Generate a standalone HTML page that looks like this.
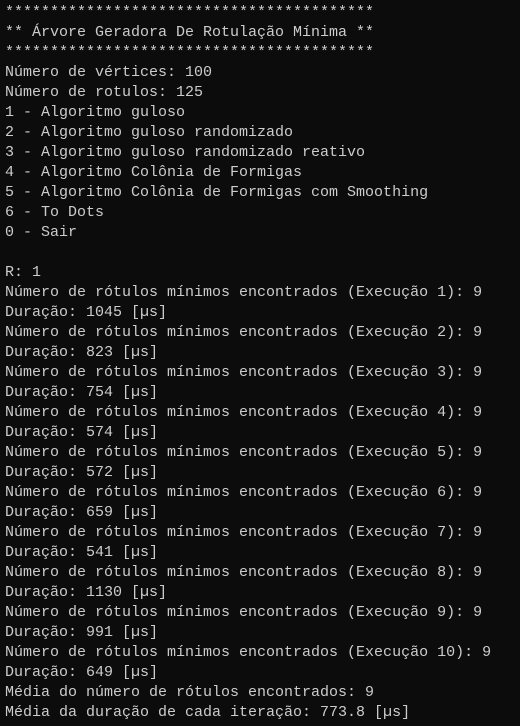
<!DOCTYPE html>
<html><head><meta charset="utf-8"><style>
html,body{margin:0;padding:0;background:#0c0c0c;width:520px;height:726px;overflow:hidden}
pre{margin:0;padding:3px 0 0 5px;font-family:"Liberation Mono","DejaVu Sans Mono",monospace;font-size:15px;line-height:20px;color:#cccccc}
</style></head><body><pre>*****************************************
** Árvore Geradora De Rotulação Mínima **
*****************************************
Número de vértices: 100
Número de rotulos: 125
1 - Algoritmo guloso
2 - Algoritmo guloso randomizado
3 - Algoritmo guloso randomizado reativo
4 - Algoritmo Colônia de Formigas
5 - Algoritmo Colônia de Formigas com Smoothing
6 - To Dots
0 - Sair

R: 1
Número de rótulos mínimos encontrados (Execução 1): 9
Duração: 1045 [µs]
Número de rótulos mínimos encontrados (Execução 2): 9
Duração: 823 [µs]
Número de rótulos mínimos encontrados (Execução 3): 9
Duração: 754 [µs]
Número de rótulos mínimos encontrados (Execução 4): 9
Duração: 574 [µs]
Número de rótulos mínimos encontrados (Execução 5): 9
Duração: 572 [µs]
Número de rótulos mínimos encontrados (Execução 6): 9
Duração: 659 [µs]
Número de rótulos mínimos encontrados (Execução 7): 9
Duração: 541 [µs]
Número de rótulos mínimos encontrados (Execução 8): 9
Duração: 1130 [µs]
Número de rótulos mínimos encontrados (Execução 9): 9
Duração: 991 [µs]
Número de rótulos mínimos encontrados (Execução 10): 9
Duração: 649 [µs]
Média do número de rótulos encontrados: 9
Média da duração de cada iteração: 773.8 [µs]
</pre></body></html>
